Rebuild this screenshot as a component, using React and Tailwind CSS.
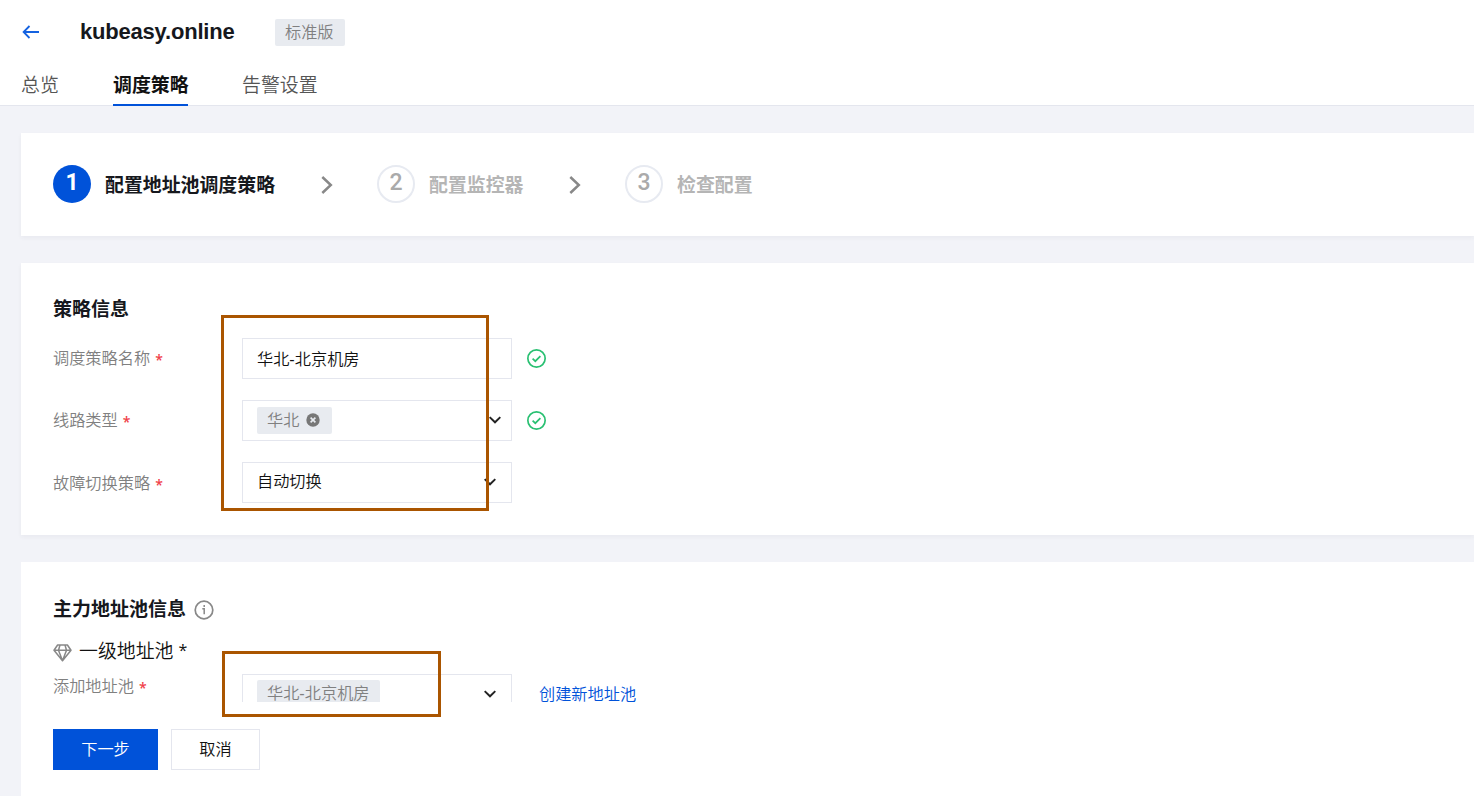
import React from 'react';

function BackIcon() {
  return (
    <svg width="18" height="14" viewBox="0 0 18 14" fill="none" stroke="#1462e0" strokeWidth="1.8">
      <path d="M7.5 1 1.6 7l5.9 6M1.8 7H17" />
    </svg>
  );
}

function StepArrow() {
  return (
    <svg className="shrink-0" width="12" height="18" viewBox="0 0 12 18" fill="none" stroke="#888" strokeWidth="2.5">
      <path d="M1.3 1 9.8 9l-8.5 8" />
    </svg>
  );
}

function Chevron() {
  return (
    <svg className="mb-0.5" width="12" height="8" viewBox="0 0 12 8" fill="none" stroke="#222" strokeWidth="1.9">
      <path d="M.7 1.1 6 6.3l5.3-5.2" />
    </svg>
  );
}

function CheckIcon() {
  return (
    <svg className="ml-[15px] shrink-0" width="19" height="19" viewBox="0 0 19 19" fill="none" stroke="#29c072" strokeWidth="1.7">
      <circle cx="9.5" cy="9.5" r="8.65" />
      <path d="m5.6 9.6 2.7 2.6 5.1-5.1" />
    </svg>
  );
}

function ClearIcon() {
  return (
    <svg className="mb-px" width="14" height="14" viewBox="0 0 14 14">
      <circle cx="7" cy="7" r="6.7" fill="#777" />
      <path d="m4.6 4.6 4.8 4.8M9.4 4.6 4.6 9.4" stroke="#e8ebf0" strokeWidth="1.6" />
    </svg>
  );
}

function InfoIcon() {
  return (
    <svg className="ml-2 mt-[3px]" width="20" height="20" viewBox="0 0 20 20" fill="none" stroke="#888" strokeWidth="1.7">
      <circle cx="10" cy="10" r="8.8" />
      <path d="M8.3 8.7h1.9v5.6M10.2 5v1.9" strokeWidth="1.5" />
    </svg>
  );
}

function DiamondIcon() {
  return (
    <svg className="mt-px" width="19" height="18" viewBox="0 0 19 18" fill="none" stroke="#888" strokeWidth="1.5" strokeLinejoin="round">
      <path d="M4.6 1h9.8L18 6.2 9.5 16.8 1 6.2zM1 6.2h17M7 1 5.5 6.2l4 10.6 4-10.6L12 1" />
    </svg>
  );
}

function Step({ number, label, active, className }) {
  return (
    <div className={`flex items-center ${className}`}>
      <span
        className={`-mt-0.5 flex h-[38px] w-[38px] shrink-0 items-center justify-center rounded-full pb-[3px] font-['Roboto',sans-serif] text-[23px] leading-none ${
          active ? 'bg-[#0052d9] font-bold text-white' : 'border-2 border-[#e7eaf1] font-medium text-[#aaa]'
        }`}
      >
        {number}
      </span>
      <span className={`ml-[14px] mt-[3px] whitespace-nowrap text-[18.9px] font-bold ${active ? 'text-[#16181d]' : 'text-[#b5b5b5]'}`}>{label}</span>
    </div>
  );
}

function Label({ children, className = '' }) {
  return (
    <div className={`flex h-[41px] w-[189px] shrink-0 items-center text-[16.2px] font-[350] text-[#808080] ${className}`}>
      {children}
      <span className="ml-[5px] mt-0.5 font-['Open_Sans',sans-serif] text-[14px] font-semibold text-[#f04048]">*</span>
    </div>
  );
}

function Box({ children, className = '' }) {
  return (
    <div className={`flex h-[41px] w-[270px] shrink-0 items-center border border-[#e4e6ee] bg-white pl-[14px] text-[16.2px] font-[350] ${className}`}>
      {children}
    </div>
  );
}

function Tag({ children, className = '' }) {
  return (
    <span className={`flex h-[27px] items-center rounded-[2px] bg-[#e8ebf0] px-[10px] text-[16.2px] font-[350] text-[#808080] ${className}`}>
      {children}
    </span>
  );
}

const watermarkRows = [0, 1, 2, 3, 4, 5, 6, 7, 8];
const watermarkColumns = [0, 1, 2, 3, 4, 5, 6, 7, 8];

function Watermark() {
  return (
    <div className="pointer-events-none absolute -left-[25px] -top-[11px] select-none font-['Open_Sans',sans-serif] text-[28px] text-black/[0.008]" aria-hidden="true">
      {watermarkRows.map((row) => (
        <div key={row} className="flex h-[89.8px] leading-[40px]">
          {watermarkColumns.map((column) => (
            <span key={column} className="w-[180px] shrink-0 tracking-[1.2px]">yangwenwb_</span>
          ))}
        </div>
      ))}
    </div>
  );
}

export default function App() {
  return (
    <div className="relative h-[796px] w-[1474px] overflow-hidden bg-[#f2f3f8] font-['Liberation_Sans','Noto_Sans_CJK_SC',sans-serif] text-[#111]">
      <header className="h-[106px] border-b border-[#e4e6ee] bg-white">
        <div className="flex h-16 items-center pl-[22px]">
          <BackIcon />
          <h1 className="ml-10 w-[155px] text-[22px] font-bold leading-7 tracking-[-0.2px] text-[#16181d]">kubeasy.online</h1>
          <Tag className="ml-10 w-[70px]">标准版</Tag>
        </div>
        <nav className="flex h-[42px] pl-[21px] text-[18.9px] leading-[44px]">
          <span className="w-[92px] font-[350] text-[#555]">总览</span>
          <span className="h-[42px] w-[75px] whitespace-nowrap border-b-2 border-[#0052d9] font-bold">调度策略</span>
          <span className="ml-[54px] font-[350] text-[#555]">告警设置</span>
        </nav>
      </header>

      <main className="ml-[21px] mt-[27px] flex flex-col gap-[27px]">
        <section className="flex h-[103px] items-center bg-white pl-8 shadow-[0_2px_4px_rgba(54,58,80,0.05)]">
          <Step number="1" label="配置地址池调度策略" active className="w-[268px]" />
          <StepArrow />
          <Step number="2" label="配置监控器" className="ml-11 w-[192px]" />
          <StepArrow />
          <Step number="3" label="检查配置" className="ml-11" />
        </section>

        <section className="h-[272px] bg-white pl-8 pt-[33px] shadow-[0_2px_4px_rgba(54,58,80,0.05)]">
          <h2 className="text-[19px] font-bold leading-7 text-[#16181d]">策略信息</h2>
          <div className="mt-[14px] flex flex-col gap-[21px]">
            <div className="flex items-center">
              <Label>调度策略名称</Label>
              <Box className="pt-0.5">华北-北京机房</Box>
              <CheckIcon />
            </div>
            <div className="flex items-center">
              <Label>线路类型</Label>
              <Box className="justify-between pr-[10px]">
                <Tag className="w-[75px] gap-[7px]">华北<ClearIcon /></Tag>
                <Chevron />
              </Box>
              <CheckIcon />
            </div>
            <div className="flex items-center">
              <Label className="pt-0.5">故障切换策略</Label>
              <Box className="justify-between pr-[15px]">
                <span className="-mt-0.5">自动切换</span>
                <Chevron />
              </Box>
            </div>
          </div>
        </section>

        <section className="h-[234px] bg-white pl-8 pt-[34px]">
          <h2 className="flex h-7 items-center text-[19px] font-bold leading-7 text-[#16181d]">
            主力地址池信息
            <span className="-mt-1"><InfoIcon /></span>
          </h2>
          <div className="mt-[14px] flex h-7 items-center text-[18.9px] font-[350]">
            <DiamondIcon />
            <span className="ml-[7px]">一级地址池</span>
            <span className="-mt-1 ml-[5px] font-['Open_Sans',sans-serif] text-[16px] font-normal">*</span>
          </div>
          <div className="mt-[8px] flex h-[28px] items-start overflow-hidden">
            <div className="-mt-2"><Label>添加地址池</Label></div>
            <Box className="justify-between pr-[15px]">
              <Tag className="-mt-0.5">华北-北京机房</Tag>
              <Chevron />
            </Box>
            <a className="ml-[27px] h-[41px] text-[16.2px] font-[350] leading-[40px] text-[#0052d9]">创建新地址池</a>
          </div>
          <div className="mt-[27px] flex gap-[13px] text-[16.2px] font-[350]">
            <button className="h-[41px] w-[105px] bg-[#0052d9] text-white">下一步</button>
            <button className="h-[41px] w-[89px] border border-[#e4e6ee] bg-white">取消</button>
          </div>
        </section>
      </main>

      <Watermark />
      <div className="absolute left-[221px] top-[315px] h-[196px] w-[268px] border-[3px] border-[#aa5500]" />
      <div className="absolute left-[222px] top-[651px] h-[66px] w-[219px] border-[3px] border-[#aa5500]" />
    </div>
  );
}
